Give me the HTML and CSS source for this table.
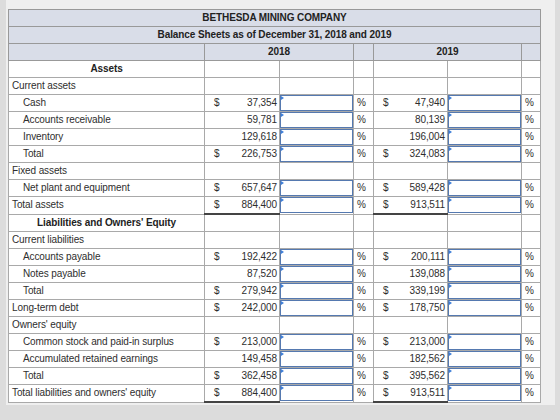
FILE: index.html
```html
<!DOCTYPE html>
<html lang="en">

<head>
  <meta charset="UTF-8">
  <meta name="viewport" content="width=device-width, initial-scale=1.0">
  <title>Balance Sheets</title>
  <link rel="stylesheet" href="styles.css">
</head>

<body>

  <div class="panel">
    <table class="sheet">
      <colgroup>
        <col class="c-label">
        <col class="c-val">
        <col class="c-in">
        <col class="c-pct">
        <col class="c-val2">
        <col class="c-in">
        <col class="c-pct2">
      </colgroup>

      <tr class="head">
        <td colspan="7" class="center bold">BETHESDA MINING COMPANY</td>
      </tr>
      <tr class="head">
        <td colspan="7" class="center bold">Balance Sheets as of December 31, 2018 and 2019</td>
      </tr>
      <tr class="head">
        <td></td>
        <td colspan="2" class="center bold">2018</td>
        <td></td>
        <td colspan="2" class="center bold">2019</td>
        <td></td>
      </tr>

      <tr>
        <td class="center bold">Assets</td>
        <td></td><td></td><td></td><td></td><td></td><td></td>
      </tr>
      <tr>
        <td class="lbl">Current assets</td>
        <td></td><td></td><td></td><td></td><td></td><td></td>
      </tr>
      <tr>
        <td class="lbl indent">Cash</td>
        <td class="val"><div><span>$</span><span>37,354</span></div></td>
        <td class="in"><div class="box"></div></td>
        <td class="pct">%</td>
        <td class="val"><div><span>$</span><span>47,940</span></div></td>
        <td class="in"><div class="box"></div></td>
        <td class="pct">%</td>
      </tr>
      <tr>
        <td class="lbl indent">Accounts receivable</td>
        <td class="val"><div><span></span><span>59,781</span></div></td>
        <td class="in"><div class="box"></div></td>
        <td class="pct">%</td>
        <td class="val"><div><span></span><span>80,139</span></div></td>
        <td class="in"><div class="box"></div></td>
        <td class="pct">%</td>
      </tr>
      <tr>
        <td class="lbl indent">Inventory</td>
        <td class="val"><div><span></span><span>129,618</span></div></td>
        <td class="in"><div class="box"></div></td>
        <td class="pct">%</td>
        <td class="val"><div><span></span><span>196,004</span></div></td>
        <td class="in"><div class="box"></div></td>
        <td class="pct">%</td>
      </tr>
      <tr class="total">
        <td class="lbl indent">Total</td>
        <td class="val"><div><span>$</span><span>226,753</span></div></td>
        <td class="in"><div class="box"></div></td>
        <td class="pct">%</td>
        <td class="val"><div><span>$</span><span>324,083</span></div></td>
        <td class="in"><div class="box"></div></td>
        <td class="pct">%</td>
      </tr>
      <tr>
        <td class="lbl">Fixed assets</td>
        <td></td><td></td><td></td><td></td><td></td><td></td>
      </tr>
      <tr>
        <td class="lbl indent">Net plant and equipment</td>
        <td class="val"><div><span>$</span><span>657,647</span></div></td>
        <td class="in"><div class="box"></div></td>
        <td class="pct">%</td>
        <td class="val"><div><span>$</span><span>589,428</span></div></td>
        <td class="in"><div class="box"></div></td>
        <td class="pct">%</td>
      </tr>
      <tr class="total grand">
        <td class="lbl">Total assets</td>
        <td class="val"><div><span>$</span><span>884,400</span></div></td>
        <td class="in"><div class="box"></div></td>
        <td class="pct">%</td>
        <td class="val"><div><span>$</span><span>913,511</span></div></td>
        <td class="in"><div class="box"></div></td>
        <td class="pct">%</td>
      </tr>

      <tr>
        <td class="center bold">Liabilities and Owners' Equity</td>
        <td></td><td></td><td></td><td></td><td></td><td></td>
      </tr>
      <tr>
        <td class="lbl">Current liabilities</td>
        <td></td><td></td><td></td><td></td><td></td><td></td>
      </tr>
      <tr>
        <td class="lbl indent">Accounts payable</td>
        <td class="val"><div><span>$</span><span>192,422</span></div></td>
        <td class="in"><div class="box"></div></td>
        <td class="pct">%</td>
        <td class="val"><div><span>$</span><span>200,111</span></div></td>
        <td class="in"><div class="box"></div></td>
        <td class="pct">%</td>
      </tr>
      <tr>
        <td class="lbl indent">Notes payable</td>
        <td class="val"><div><span></span><span>87,520</span></div></td>
        <td class="in"><div class="box"></div></td>
        <td class="pct">%</td>
        <td class="val"><div><span></span><span>139,088</span></div></td>
        <td class="in"><div class="box"></div></td>
        <td class="pct">%</td>
      </tr>
      <tr class="total">
        <td class="lbl indent">Total</td>
        <td class="val"><div><span>$</span><span>279,942</span></div></td>
        <td class="in"><div class="box"></div></td>
        <td class="pct">%</td>
        <td class="val"><div><span>$</span><span>339,199</span></div></td>
        <td class="in"><div class="box"></div></td>
        <td class="pct">%</td>
      </tr>
      <tr>
        <td class="lbl">Long-term debt</td>
        <td class="val"><div><span>$</span><span>242,000</span></div></td>
        <td class="in"><div class="box"></div></td>
        <td class="pct">%</td>
        <td class="val"><div><span>$</span><span>178,750</span></div></td>
        <td class="in"><div class="box"></div></td>
        <td class="pct">%</td>
      </tr>
      <tr>
        <td class="lbl">Owners' equity</td>
        <td></td><td></td><td></td><td></td><td></td><td></td>
      </tr>
      <tr>
        <td class="lbl indent">Common stock and paid-in surplus</td>
        <td class="val"><div><span>$</span><span>213,000</span></div></td>
        <td class="in"><div class="box"></div></td>
        <td class="pct">%</td>
        <td class="val"><div><span>$</span><span>213,000</span></div></td>
        <td class="in"><div class="box"></div></td>
        <td class="pct">%</td>
      </tr>
      <tr>
        <td class="lbl indent">Accumulated retained earnings</td>
        <td class="val"><div><span></span><span>149,458</span></div></td>
        <td class="in"><div class="box"></div></td>
        <td class="pct">%</td>
        <td class="val"><div><span></span><span>182,562</span></div></td>
        <td class="in"><div class="box"></div></td>
        <td class="pct">%</td>
      </tr>
      <tr class="total">
        <td class="lbl indent">Total</td>
        <td class="val"><div><span>$</span><span>362,458</span></div></td>
        <td class="in"><div class="box"></div></td>
        <td class="pct">%</td>
        <td class="val"><div><span>$</span><span>395,562</span></div></td>
        <td class="in"><div class="box"></div></td>
        <td class="pct">%</td>
      </tr>
      <tr class="total grand">
        <td class="lbl">Total liabilities and owners' equity</td>
        <td class="val"><div><span>$</span><span>884,400</span></div></td>
        <td class="in"><div class="box"></div></td>
        <td class="pct">%</td>
        <td class="val"><div><span>$</span><span>913,511</span></div></td>
        <td class="in"><div class="box"></div></td>
        <td class="pct">%</td>
      </tr>
    </table>
  </div>

</body>

</html>
```

FILE: styles.css
```css
body {
  margin: 0;
  background: #dcdcdc;
  font-family: "Liberation Sans", Arial, sans-serif;
  font-size: 10px;
  letter-spacing: -0.1px;
  color: #2e2e2e;
}

.panel {
  margin-left: 6px;
  width: 547px;
  padding: 9px 0 2px 2px;
  background: #efefef;
}

.sheet {
  border-collapse: collapse;
  table-layout: fixed;
  width: 532px;
  background: #fff;
}

.c-label { width: 196px; }
.c-val { width: 75px; }
.c-in { width: 74px; }
.c-pct { width: 20px; }
.c-val2 { width: 74px; }
.c-pct2 { width: 19px; }

.sheet td {
  height: 16px;
  padding: 0;
  border: 1px solid #a9a9a9;
  line-height: 16px;
  white-space: nowrap;
  overflow: hidden;
}

.head td {
  background: #d9dde8;
  border-color: #999;
}

.center {
  text-align: center;
}

.bold {
  font-weight: bold;
  color: #222;
}

.lbl {
  padding-left: 3px !important;
}

.lbl.indent {
  padding-left: 14px !important;
}

.val div {
  display: flex;
  justify-content: space-between;
  padding: 0 2px 0 9px;
}

.pct {
  padding-left: 3px !important;
}

.sheet td.in {
  padding: 0;
}

.box {
  position: relative;
  height: 16px;
  box-sizing: border-box;
  border: 1px solid #5579b0;
}

/* little flag in the corner of each answer box */
.box::before {
  content: "";
  position: absolute;
  left: 0;
  top: 0;
  border-top: 2px solid transparent;
  border-bottom: 2px solid transparent;
  border-left: 3px solid #3f7fd8;
}

.total td.val {
  border-top: 1px solid #444;
}

.grand td.val {
  border-bottom: 2px solid #444;
}
```
